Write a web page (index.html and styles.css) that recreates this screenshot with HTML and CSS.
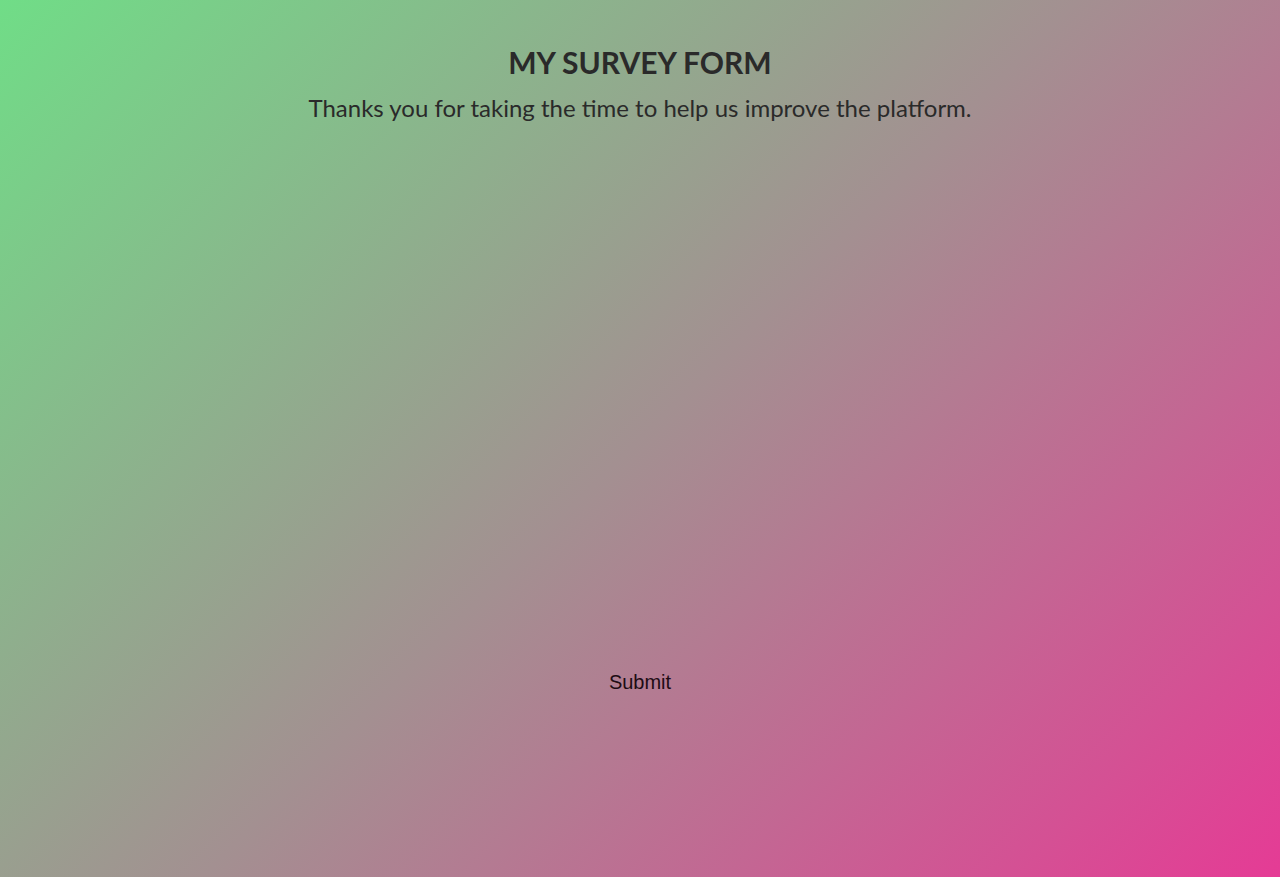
FILE: index.html
```html
<!DOCTYPE html>
<html lang="en">
<head>
<meta charset="utf-8">
<title>Survey Form</title>
<link rel="stylesheet" href="styles.css">
</head>
<body>
<main class="container">
  <header class="header">
    <h1 class="title">MY SURVEY FORM</h1>
    <p class="description">Thanks you for taking the time to help us improve the platform.</p>
  </header>
  <form class="survey-form">
    <div class="form-space"></div>
    <div class="form-actions">
      <button type="submit" class="submit-button">Submit</button>
    </div>
  </form>
</main>
</body>
</html>
```
FILE: styles.css
```css
* { box-sizing: border-box; }
html, body { margin: 0; padding: 0; height: 100%; }
body {
  font-family: Lato, "Open Sans", sans-serif;
  background: linear-gradient(135deg, #70dd87 0%, #a39091 50%, #e53b95 100%);
  color: #2a2a2a;
  min-height: 877px;
}
.container {
  display: flex;
  flex-direction: column;
  align-items: center;
}
.header {
  text-align: center;
  padding-top: 43px;
}
.title {
  margin: 0;
  font-size: 30px;
  font-weight: 700;
  line-height: 38px;
}
.description {
  margin: 12px 0 0;
  font-size: 24px;
  line-height: 30px;
  font-weight: 400;
}
.survey-form {
  display: flex;
  flex-direction: column;
  align-items: center;
  width: 100%;
}
.form-space { height: 547px; }
.submit-button {
  background: transparent;
  border: none;
  font-family: "Liberation Sans", Arial, sans-serif;
  font-size: 20px;
  color: #1e0c14;
  padding: 0;
  line-height: 24px;
  cursor: pointer;
}
```
